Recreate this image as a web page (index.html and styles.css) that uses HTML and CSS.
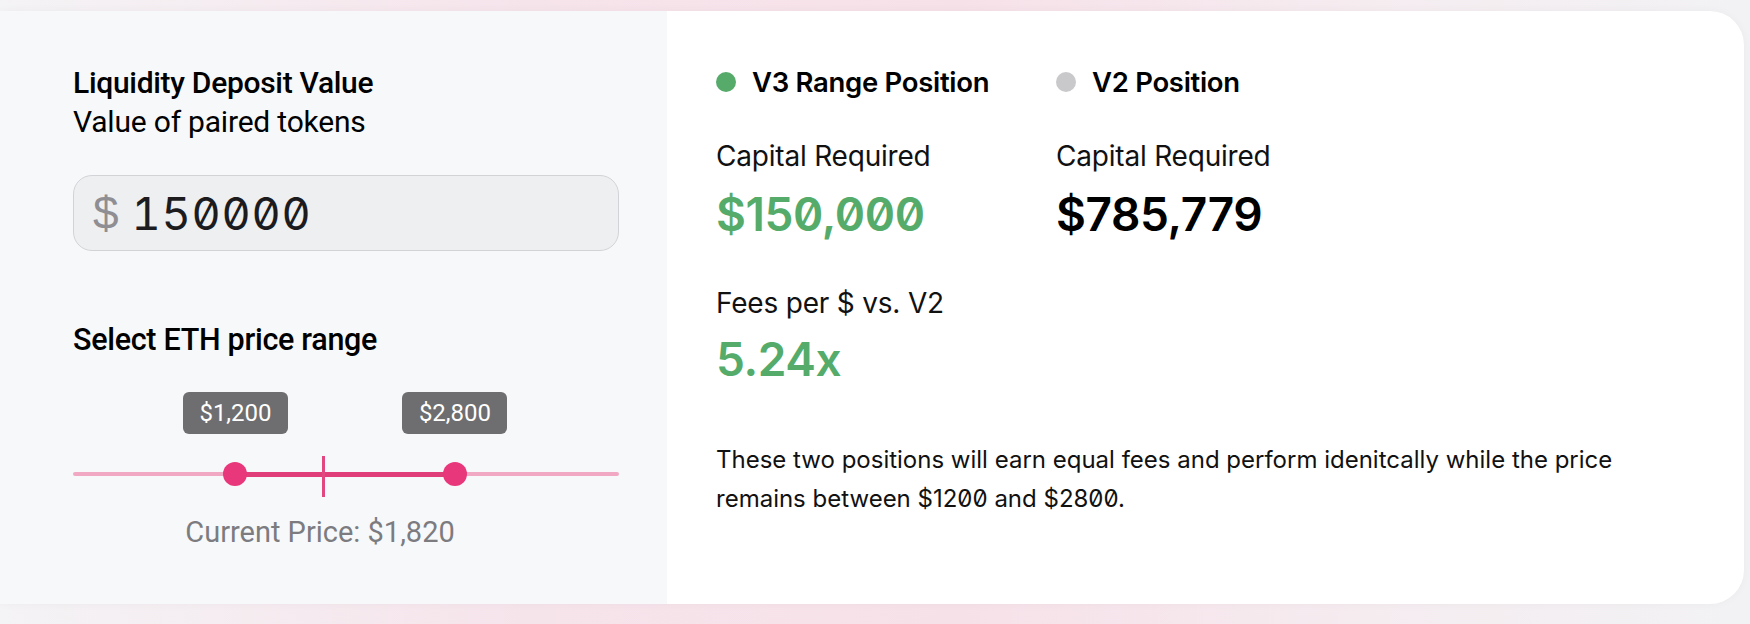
FILE: index.html
```html
<!DOCTYPE html>
<html lang="en">
<head>
<meta charset="utf-8">
<title>Capital efficiency</title>
<link rel="stylesheet" href="styles.css">
</head>
<body>
<div class="card">
  <section class="inputs">
    <h2 class="label-title">Liquidity Deposit Value</h2>
    <p class="label-sub">Value of paired tokens</p>
    <div class="amount-field"><span class="currency">$</span><span class="amount">150000</span></div>
    <h2 class="label-title range-title">Select ETH price range</h2>
    <div class="slider">
      <div class="track"></div>
      <div class="track-active" style="left:29.76%; width:40.2%"></div>
      <div class="tick" style="left:45.9%"></div>
      <div class="thumb" style="left:29.76%"></div>
      <div class="thumb" style="left:69.96%"></div>
      <div class="tip" style="left:29.76%">$1,200</div>
      <div class="tip" style="left:69.96%">$2,800</div>
    </div>
    <p class="current">Current Price: $1,820</p>
  </section>
  <section class="results">
    <div class="cols">
      <div class="col">
        <div class="legend"><span class="dot dot-green"></span>V3 Range Position</div>
        <div class="stat-label">Capital Required</div>
        <div class="stat-value green">$150,000</div>
        <div class="stat-label fees-label">Fees per $ vs. V2</div>
        <div class="stat-value green">5.24x</div>
      </div>
      <div class="col">
        <div class="legend"><span class="dot dot-gray"></span>V2 Position</div>
        <div class="stat-label">Capital Required</div>
        <div class="stat-value">$785,779</div>
      </div>
    </div>
    <p class="note">These two positions will earn equal fees and perform idenitcally while the price remains between $1200 and $2800.</p>
  </section>
</div>
</body>
</html>
```

FILE: styles.css
```css
html, body {
  margin: 0;
  padding: 0;
}

body {
  width: 1750px;
  height: 624px;
  overflow: hidden;
  background: linear-gradient(90deg, #f4f3f5 0%, #f6e4eb 30%, #f7e1e9 55%, #f5ecf0 78%, #f2f2f4 100%);
  font-family: "Roboto", "Liberation Sans", Arial, sans-serif;
  color: #000;
}

.card {
  margin-top: 11px;
  width: 1744px;
  height: 593px;
  display: grid;
  grid-template-columns: 667px 1fr;
  border-radius: 0 34px 34px 0;
  overflow: hidden;
  background: #fff;
  box-shadow: 0 0 10px rgba(0, 0, 0, 0.035);
}

/* ---------- left panel ---------- */
.inputs {
  background: #f7f8fa;
  padding: 56px 48px 0 73px;
}

.label-title {
  margin: 0;
  font-size: 30px;
  line-height: 32px;
  font-weight: 500;
  letter-spacing: -0.3px;
}

.label-sub {
  margin: 5px 0 0;
  font-size: 30px;
  line-height: 36px;
  letter-spacing: -0.2px;
}

.amount-field {
  margin-top: 35px;
  box-sizing: border-box;
  width: 546px;
  height: 76px;
  border: 1.5px solid #d2d3d7;
  border-radius: 19px;
  background: #eeeff1;
  display: flex;
  align-items: center;
  padding-left: 19px;
}

.currency {
  font-family: "Liberation Sans", Arial, sans-serif;
  font-size: 46px;
  color: #8e8e93;
  margin-right: 13px;
}

.amount {
  font-family: "Inter", "Liberation Sans", sans-serif;
  font-feature-settings: "zero" 1, "tnum" 1;
  font-size: 45px;
  color: #1c1c1e;
  letter-spacing: 0.8px;
}

.range-title {
  margin-top: 73px;
  font-size: 30.5px;
}

.slider {
  position: relative;
  margin-top: 36px;
  width: 546px;
  height: 112px;
}

.track {
  position: absolute;
  left: 0;
  right: 0;
  top: 80px;
  height: 4px;
  border-radius: 2px;
  background: #f1a9c3;
}

.track-active {
  position: absolute;
  top: 80px;
  height: 5px;
  background: #e03e79;
}

.tick {
  position: absolute;
  top: 64px;
  width: 3px;
  height: 41px;
  margin-left: -1.5px;
  background: #e2487f;
}

.thumb {
  position: absolute;
  top: 70px;
  width: 24px;
  height: 24px;
  margin-left: -12px;
  border-radius: 50%;
  background: #e8377b;
}

.tip {
  position: absolute;
  top: 0;
  width: 105px;
  height: 42px;
  margin-left: -52.5px;
  border-radius: 6px;
  background: #6e6e70;
  color: #fff;
  font-size: 24px;
  line-height: 42px;
  text-align: center;
}

.current {
  margin: 11px 0 0;
  width: 494px;
  text-align: center;
  font-size: 29px;
  line-height: 34px;
  color: #7c7c80;
}

/* ---------- right panel ---------- */
.results {
  padding: 55px 0 0 49px;
  font-family: "Inter", "Liberation Sans", sans-serif;
  font-feature-settings: "zero" 1;
  color: #111;
}

.cols {
  display: grid;
  grid-template-columns: 340px 340px;
}

.legend {
  display: flex;
  align-items: center;
  gap: 16px;
  font-size: 27.5px;
  line-height: 32px;
  font-weight: 600;
  color: #000;
  letter-spacing: -0.3px;
}

.dot {
  width: 20px;
  height: 20px;
  border-radius: 50%;
  flex: none;
}

.dot-green { background: #56ab6b; }
.dot-gray { background: #c9c9cb; }

.stat-label {
  margin-top: 42px;
  font-size: 28px;
  line-height: 32px;
  letter-spacing: -0.2px;
}

.fees-label {
  margin-top: 46px;
}

.stat-value {
  margin-top: 15px;
  font-size: 46px;
  line-height: 54px;
  font-weight: 600;
  color: #000;
  letter-spacing: -0.4px;
}

.stat-value.green {
  color: #55ab69;
}

.fees-label + .stat-value {
  margin-top: 13px;
}

.note {
  margin: 54px 0 0;
  width: 930px;
  font-size: 24px;
  line-height: 39px;
  color: #111;
}
```
